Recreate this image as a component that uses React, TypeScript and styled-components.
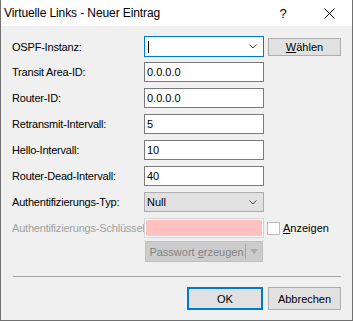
import * as React from "react";
import styled, { createGlobalStyle } from "styled-components";

const Global = createGlobalStyle`
  html, body {
    margin: 0;
    padding: 0;
    background: #ffffff;
  }
  body {
    font-family: "Liberation Sans", Arial, sans-serif;
  }
`;

const Dialog = styled.div`
  width: 353px;
  height: 321px;
  box-sizing: border-box;
  border: 1px solid #707070;
  border-top: none;
  background: #f0f0f0;
  display: flex;
  flex-direction: column;
  font-size: 11px;
  color: #000;
`;

const TitleBar = styled.div`
  height: 26px;
  background: #ffffff;
  display: flex;
  align-items: center;
  flex-shrink: 0;
`;

const Title = styled.span`
  flex: 1;
  padding-left: 3px;
  font-size: 12px;
  letter-spacing: -0.1px;
  padding-bottom: 1px;
`;

const CaptionButton = styled.div`
  width: 46px;
  height: 26px;
  display: flex;
  align-items: center;
  justify-content: center;
  font-size: 13px;
`;

const Body = styled.div`
  flex: 1;
  display: flex;
  flex-direction: column;
  padding: 10px 11px 0 11px;
`;

const Row = styled.div<{ $mt?: number; $h?: number }>`
  display: flex;
  align-items: center;
  margin-top: ${(p) => p.$mt ?? 0}px;
  height: ${(p) => p.$h ?? 20}px;
`;

const Label = styled.span<{ $disabled?: boolean }>`
  width: 132px;
  flex-shrink: 0;
  white-space: nowrap;
  overflow: visible;
  letter-spacing: -0.2px;
  color: ${(p) => (p.$disabled ? "#a0a0a0" : "#000")};
  position: relative;
  z-index: 0;
`;

const Field = styled.div<{ $border?: string; $bg?: string }>`
  width: 120px;
  height: 100%;
  box-sizing: border-box;
  border: 1px solid ${(p) => p.$border ?? "#7a7a7a"};
  background: ${(p) => p.$bg ?? "#ffffff"};
  display: flex;
  align-items: center;
  padding-left: 2px;
  position: relative;
  z-index: 1;
  flex-shrink: 0;
`;

const FieldText = styled.span`
  flex: 1;
`;

const Caret = styled.span`
  width: 1px;
  height: 12px;
  background: #000;
  margin-left: 1px;
`;

const Chevron = () => (
  <svg width="8" height="5" viewBox="0 0 8 5" style={{ marginRight: 6 }}>
    <path d="M0.5 0.5 L4 4 L7.5 0.5" fill="none" stroke="#444" strokeWidth="1" />
  </svg>
);

const Button = styled.div<{ $w: number; $h: number; $primary?: boolean }>`
  width: ${(p) => p.$w}px;
  height: ${(p) => p.$h}px;
  box-sizing: border-box;
  border: ${(p) => (p.$primary ? "2px solid #0078d7" : "1px solid #adadad")};
  background: #e1e1e1;
  display: flex;
  align-items: center;
  justify-content: center;
  flex-shrink: 0;
`;

const DisabledButton = styled.div`
  width: 118px;
  height: 21px;
  box-sizing: border-box;
  border: 1px solid #bfbfbf;
  background: #cccccc;
  color: #838383;
  display: flex;
  align-items: center;
  margin-left: 1px;
`;

const SplitText = styled.span`
  flex: 1;
  text-align: center;
  padding-left: 2px;
`;

const SplitArrow = styled.span`
  width: 15px;
  height: 15px;
  border-left: 1px solid #a0a0a0;
  display: flex;
  align-items: center;
  justify-content: center;
  margin-right: 1px;
`;

const Check = styled.span`
  width: 13px;
  height: 13px;
  box-sizing: border-box;
  border: 1px solid #bcbcbc;
  background: #fff;
  margin-left: 3px;
  margin-right: 3px;
  flex-shrink: 0;
`;

const Separator = styled.div`
  height: 1px;
  background: #a0a0a0;
  margin-top: 14px;
  margin-left: 1px;
  margin-right: 0px;
`;

const Footer = styled.div`
  display: flex;
  justify-content: flex-end;
  gap: 5px;
  margin-top: 10px;
`;

const U = styled.span`
  text-decoration: underline;
`;

export default function App() {
  return (
    <>
      <Global />
      <Dialog>
        <TitleBar>
          <Title>Virtuelle Links - Neuer Eintrag</Title>
          <CaptionButton>?</CaptionButton>
          <CaptionButton>
            <svg width="11" height="11" viewBox="0 0 11 11">
              <path d="M0.5 0.5 L10.5 10.5 M10.5 0.5 L0.5 10.5" stroke="#000" strokeWidth="1" />
            </svg>
          </CaptionButton>
        </TitleBar>
        <Body>
          <Row $h={21}>
            <Label>OSPF-Instanz:</Label>
            <Field $border="#0078d7">
              <Caret />
              <FieldText />
              <Chevron />
            </Field>
            <Button $w={73} $h={18} style={{ marginLeft: 4 }}>
              <span>
                <U>W</U>ählen
              </span>
            </Button>
          </Row>
          <Row $mt={5}>
            <Label>Transit Area-ID:</Label>
            <Field>0.0.0.0</Field>
          </Row>
          <Row $mt={6}>
            <Label>Router-ID:</Label>
            <Field>0.0.0.0</Field>
          </Row>
          <Row $mt={6}>
            <Label>Retransmit-Intervall:</Label>
            <Field>5</Field>
          </Row>
          <Row $mt={6}>
            <Label>Hello-Intervall:</Label>
            <Field>10</Field>
          </Row>
          <Row $mt={6}>
            <Label>Router-Dead-Intervall:</Label>
            <Field>40</Field>
          </Row>
          <Row $mt={6}>
            <Label>Authentifizierungs-Typ:</Label>
            <Field $border="#adadad" $bg="#e1e1e1">
              <FieldText>Null</FieldText>
              <Chevron />
            </Field>
          </Row>
          <Row $mt={6}>
            <Label $disabled>Authentifizierungs-Schlüssel</Label>
            <Field $border="#d4d4d4" $bg="#ffc0c0" style={{ boxShadow: "inset 0 0 0 1px #fff" }} />
            <Check />
            <span>
              <U>A</U>nzeigen
            </span>
          </Row>
          <Row $mt={3} $h={21}>
            <Label />
            <DisabledButton>
              <SplitText>
                Passwort <U>e</U>rzeugen
              </SplitText>
              <SplitArrow>
                <svg width="8" height="5" viewBox="0 0 8 5">
                  <path d="M0 0 L8 0 L4 5 Z" fill="#a8a8a8" />
                </svg>
              </SplitArrow>
            </DisabledButton>
          </Row>
          <Separator />
          <Footer>
            <Button $w={76} $h={23} $primary>
              OK
            </Button>
            <Button $w={73} $h={23}>
              Abbrechen
            </Button>
          </Footer>
        </Body>
      </Dialog>
    </>
  );
}
